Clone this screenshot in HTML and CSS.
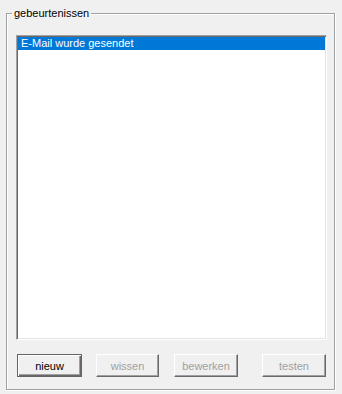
FILE: index.html
```html
<!DOCTYPE html>
<html>
<head>
    <title>gebeurtenissen</title>
    <link rel="stylesheet" href="styles.css">
</head>
<body>
    <fieldset class="group">
        <legend class="caption">gebeurtenissen</legend>
        <div class="listbox">
            <div class="item selected">E-Mail wurde gesendet</div>
        </div>
        <div class="buttons">
            <button class="btn default">nieuw</button>
            <button class="btn wide" disabled>wissen</button>
            <button class="btn mid" disabled>bewerken</button>
            <button class="btn last">testen</button>
        </div>
    </fieldset>
</body>
</html>
```

FILE: styles.css
```css
body, html {
    background-color: #F0F0F0;
    margin: 0;
    padding: 0;
    width: 342px;
    height: 394px;
    font-family: "Liberation Sans", Arial, sans-serif;
    font-size: 11px;
    color: #000;
}

.group {
    box-sizing: border-box;
    width: 329px;
    height: 383px;
    margin: 7px 0 0 6px;
    padding: 0;
    border: 1px solid #A0A0A0;
    box-shadow: inset 1px 1px #FFF, 1px 1px #FFF;
} .caption {
    margin-left: 5px;
    padding: 0 2px;
    line-height: 13px;
} .listbox {
    box-sizing: border-box;
    width: 311px;
    height: 305px;
    margin: 15px 0 0 9px;
    padding: 1px;
    background: #FFF;
    border: 1px solid;
    border-color: #A0A0A0 #FFF #FFF #A0A0A0;
    box-shadow: inset 1px 1px #696969, inset -1px -1px #E3E3E3;
} .item {
    height: 13px;
    line-height: 13px;
    padding-left: 3px;
    white-space: nowrap;
} .selected {
    background: #0078D7;
    color: #FFF;
}

.buttons {
    display: flex;
    width: 309px;
    margin: 14px 0 0 10px;
} .btn {
    box-sizing: border-box;
    width: 64px;
    height: 23px;
    padding: 0;
    font-family: inherit;
    font-size: 11px;
    color: #000;
    background: #F0F0F0;
    border: 1px solid;
    border-color: #FFF #696969 #696969 #FFF;
    box-shadow: inset -1px -1px #A0A0A0, inset 1px 1px #F0F0F0;
    border-radius: 0;
} .btn:disabled {
    color: #A0A0A0;
} .default {
    width: 65px;
    border-color: #646464;
    box-shadow: inset 1px 1px #FFF, inset -1px -1px #696969, inset -2px -2px #A0A0A0;
} .wide {
    width: 63px;
    margin-left: 14px;
} .mid {
    margin-left: 15px;
} .last {
    margin-left: auto;
    color: #A0A0A0;
}
```
